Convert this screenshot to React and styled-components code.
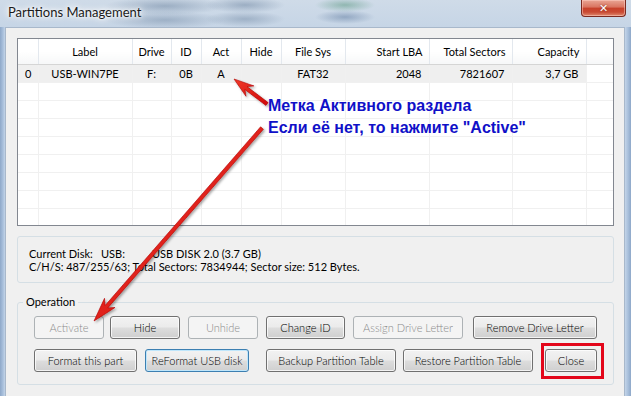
import React from 'react';
import styled, { createGlobalStyle, css } from 'styled-components';

const columns = [
    { key: 'num', title: '', width: 20, align: 'left' },
    { key: 'label', title: 'Label', width: 94, align: 'center' },
    { key: 'drive', title: 'Drive', width: 39, align: 'center' },
    { key: 'id', title: 'ID', width: 30, align: 'center' },
    { key: 'act', title: 'Act', width: 40, align: 'center' },
    { key: 'hide', title: 'Hide', width: 40, align: 'center' },
    { key: 'fs', title: 'File Sys', width: 64, align: 'center' },
    { key: 'lba', title: 'Start LBA', width: 84, align: 'right' },
    { key: 'total', title: 'Total Sectors', width: 83, align: 'right' },
    { key: 'cap', title: 'Capacity', width: 74, align: 'right' },
    { key: 'fill', title: '', width: 27, align: 'left' },
];

const partition = {
    num: '0', label: 'USB-WIN7PE', drive: 'F:', id: '0B', act: 'A', hide: '',
    fs: 'FAT32', lba: '2048', total: '7821607', cap: '3,7 GB', fill: '',
};

const row1 = [
    { text: 'Activate', w: 70, ml: 0, disabled: true },
    { text: 'Hide', w: 70, ml: 6 },
    { text: 'Unhide', w: 70, ml: 8, disabled: true },
    { text: 'Change ID', w: 79, ml: 8 },
    { text: 'Assign Drive Letter', w: 110, ml: 8, disabled: true },
    { text: 'Remove Drive Letter', w: 124, ml: 10 },
];

const row2 = [
    { text: 'Format this part', w: 103, ml: 0 },
    { text: 'ReFormat USB disk', w: 104, ml: 8, isDefault: true },
    { text: 'Backup Partition Table', w: 130, ml: 17 },
    { text: 'Restore Partition Table', w: 130, ml: 7 },
    { text: 'Close', w: 52, ml: 12, marked: true },
];

// polygon for a barbed arrow from tail (x1,y1) to tip (x2,y2)
const arrowPoints = (x1, y1, x2, y2, shaft = 3.6, headLen = 22, headW = 14) => {
    const dx = x2 - x1, dy = y2 - y1;
    const len = Math.hypot(dx, dy);
    const ux = dx / len, uy = dy / len;
    const px = -uy, py = ux;
    const bx = x2 - ux * headLen, by = y2 - uy * headLen;
    const nx = bx + ux * 5, ny = by + uy * 5;
    const s = shaft / 2, h = headW / 2;
    const pts = [
        [x1 + px * s, y1 + py * s],
        [nx + px * s, ny + py * s],
        [bx + px * h, by + py * h],
        [x2, y2],
        [bx - px * h, by - py * h],
        [nx - px * s, ny - py * s],
        [x1 - px * s, y1 - py * s],
    ];
    return pts.map(p => p.map(v => v.toFixed(1)).join(',')).join(' ');
};

const App = () => (
    <>
        <GlobalStyle />
        <Window>
            <TitleBar>
                <Title>Partitions Management</Title>
                <CloseX>&#x2715;</CloseX>
            </TitleBar>
            <Client>
                <ListView>
                    <Table>
                        <colgroup>
                            {columns.map(c => <col key={c.key} style={{ width: c.width }} />)}
                        </colgroup>
                        <thead>
                            <tr>
                                {columns.map(c => <Th key={c.key} $align={c.align}>{c.title}</Th>)}
                            </tr>
                        </thead>
                        <tbody>
                            <Tr $selected>
                                {columns.map(c => <Td key={c.key} $align={c.align}>{partition[c.key]}</Td>)}
                            </Tr>
                            {Array.from({ length: 9 }).map((_, i) => (
                                <Tr key={i}>
                                    {columns.map(c => <Td key={c.key} />)}
                                </Tr>
                            ))}
                        </tbody>
                    </Table>
                </ListView>

                <InfoGroup>
                    <InfoLine>
                        <InfoCell $w={72}>Current Disk:</InfoCell>
                        <InfoCell $w={51}>USB:</InfoCell>
                        <span>USB DISK 2.0 (3.7 GB)</span>
                    </InfoLine>
                    <InfoLine>C/H/S: 487/255/63; Total Sectors: 7834944; Sector size: 512 Bytes.</InfoLine>
                </InfoGroup>

                <OperationGroup>
                    <Legend>Operation</Legend>
                    <ButtonRow>
                        {row1.map(b => (
                            <Button key={b.text} $w={b.w} $ml={b.ml} disabled={b.disabled}>{b.text}</Button>
                        ))}
                    </ButtonRow>
                    <ButtonRow>
                        {row2.map(b => (
                            <Button key={b.text} $w={b.w} $ml={b.ml} $default={b.isDefault} $marked={b.marked}>
                                {b.text}
                            </Button>
                        ))}
                    </ButtonRow>
                </OperationGroup>
            </Client>

            <Callout>
                <div>Метка Активного раздела</div>
                <div>Если её нет, то нажмите "Active"</div>
            </Callout>

            <ArrowLayer width="631" height="396" viewBox="0 0 631 396">
                <defs>
                    <filter id="arrowShadow" x="-20%" y="-20%" width="140%" height="140%">
                        <feDropShadow dx="1.5" dy="1.5" stdDeviation="1.2" floodColor="#000" floodOpacity="0.35" />
                    </filter>
                    <linearGradient id="arrowFill" x1="0" y1="0" x2="1" y2="1">
                        <stop offset="0" stopColor="#f03a2a" />
                        <stop offset="1" stopColor="#d10a0a" />
                    </linearGradient>
                </defs>
                <g filter="url(#arrowShadow)" fill="url(#arrowFill)" stroke="#b00000" strokeWidth="0.6">
                    <polygon points={arrowPoints(267, 104, 234, 79, 3.6, 20, 13)} />
                    <polygon points={arrowPoints(262, 128, 94, 321, 3.6, 24, 14)} />
                </g>
            </ArrowLayer>
        </Window>
    </>
);

const uiFont = 'Lato, "Noto Sans", sans-serif';

const GlobalStyle = createGlobalStyle`
    html, body {
        margin: 0;
        padding: 0;
    }
    body {
        width: 631px;
        height: 396px;
        overflow: hidden;
        font-family: ${uiFont};
        font-size: 11px;
        font-weight: 400;
        color: #000;
    }
`;

const Window = styled.div`
    position: relative;
    width: 631px;
    height: 396px;
    display: flex;
    flex-direction: column;
    overflow: hidden;
    background: linear-gradient(90deg, #8ea8c9 0, #a9c0dc 3px, #c3d4e8 5px, #c3d4e8 625px, #a9c0dc 628px, #8ea8c9 631px);
`;

const TitleBar = styled.div`
    height: 27px;
    flex-shrink: 0;
    display: flex;
    justify-content: space-between;
    align-items: flex-start;
    padding: 0 5px 0 8px;
    background:
        radial-gradient(ellipse 60px 9px at 165px 6px, rgba(95, 120, 150, 0.45), transparent),
        radial-gradient(ellipse 60px 9px at 165px 20px, rgba(95, 120, 150, 0.4), transparent),
        radial-gradient(ellipse 40px 8px at 245px 5px, rgba(95, 120, 150, 0.45), transparent),
        radial-gradient(ellipse 40px 8px at 245px 19px, rgba(95, 120, 150, 0.4), transparent),
        radial-gradient(ellipse 30px 7px at 345px 5px, rgba(70, 140, 110, 0.45), transparent),
        radial-gradient(ellipse 30px 7px at 345px 17px, rgba(80, 110, 150, 0.45), transparent),
        linear-gradient(180deg, #cfdbe8 0%, #c6d5e6 100%);
`;

const Title = styled.div`
    margin-top: 4px;
    font-size: 13px;
    line-height: 16px;
    color: #1a1a1a;
    text-shadow: 0 0 6px #fff, 0 0 10px #fff, 0 0 3px #fff;
`;

const CloseX = styled.div`
    width: 45px;
    height: 17px;
    box-sizing: border-box;
    display: flex;
    align-items: center;
    justify-content: center;
    border: 1px solid #7a2a20;
    border-top: none;
    border-radius: 0 0 4px 4px;
    background: linear-gradient(180deg, #e9a594 0%, #d9735f 45%, #c7402a 50%, #c94a33 75%, #df8a6f 100%);
    box-shadow: inset 0 0 0 1px rgba(255, 210, 200, 0.5);
    color: #fff;
    font-family: "DejaVu Sans", sans-serif;
    font-size: 11px;
    font-weight: bold;
    text-shadow: 0 0 2px #7a2a20;
`;

const Client = styled.div`
    flex: 1;
    margin: 0 6px 0 5px;
    border: 1px solid #a8b8cb;
    border-bottom: none;
    background: #f0f0f0;
    padding: 10px 10px 0 11px;
    display: flex;
    flex-direction: column;
`;

const ListView = styled.div`
    height: 186px;
    border: 1px solid #828790;
    background: #fff;
    overflow: hidden;
`;

const Table = styled.table`
    width: 100%;
    table-layout: fixed;
    border-collapse: collapse;
`;

const Th = styled.th`
    height: 24px;
    padding: 0 ${p => (p.$align === 'right' ? '6px' : '4px')} 1px 4px;
    font-weight: 400;
    font-size: 11px;
    color: #000;
    text-align: ${p => p.$align};
    white-space: nowrap;
    background: linear-gradient(180deg, #ffffff 0%, #ffffff 50%, #f6f7f8 100%);
    border-right: 1px solid #e3e8ee;
    border-bottom: 1px solid #d5d5d5;
`;

const Tr = styled.tr`
    height: 18px;
    ${p => p.$selected && css`
        background: #efefef;
        td:last-child { background: #fff; }
    `}
`;

const Td = styled.td`
    padding: 0 ${p => (p.$align === 'right' ? '7px' : '4px')} 0 ${p => (p.$align === 'left' ? '7px' : '4px')};
    font-size: 11px;
    line-height: 17px;
    text-align: ${p => p.$align || 'left'};
    white-space: nowrap;
    overflow: hidden;
    border-right: 1px solid #f0f0f0;
    border-bottom: 1px solid #f0f0f0;
`;

const InfoGroup = styled.div`
    margin-top: 10px;
    height: 47px;
    box-sizing: border-box;
    border: 1px solid #d5dfe5;
    border-radius: 3px;
    padding: 10px 11px 0;
`;

const InfoLine = styled.div`
    display: flex;
    font-size: 11px;
    line-height: 13px;
    white-space: nowrap;
`;

const InfoCell = styled.span`
    width: ${p => p.$w}px;
    flex-shrink: 0;
`;

const OperationGroup = styled.fieldset`
    margin: 12px 0 0;
    border: 1px solid #d5dfe5;
    border-radius: 3px;
    padding: 7px 16px 12px 16px;
    display: flex;
    flex-direction: column;
    gap: 10px;
`;

const Legend = styled.legend`
    margin-left: -11px;
    padding: 0 3px;
    font-size: 11px;
    line-height: 14px;
`;

const ButtonRow = styled.div`
    display: flex;
`;

const Button = styled.button`
    position: relative;
    width: ${p => p.$w}px;
    height: 23px;
    margin-left: ${p => p.$ml}px;
    padding: 0;
    font-family: ${uiFont};
    font-size: 11px;
    font-weight: 300;
    color: #000;
    border: 1px solid #707070;
    border-radius: 3px;
    background: linear-gradient(180deg, #f2f2f2 0%, #ebebeb 48%, #dddddd 52%, #cfcfcf 100%);
    box-shadow: inset 0 0 0 1px rgba(255, 255, 255, 0.75);
    white-space: nowrap;

    ${p => p.disabled && css`
        border-color: #adb2b5;
        background: #f4f4f4;
        color: #8b8b8b;
        box-shadow: none;
    `}

    ${p => p.$default && css`
        border-color: #3c7fb1;
        box-shadow: inset 0 0 0 1px #bfe6fb;
    `}

    ${p => p.$marked && css`
        &::after {
            content: '';
            position: absolute;
            top: -7px;
            left: -5px;
            right: -8px;
            bottom: -8px;
            border: 3px solid #e3061a;
        }
    `}
`;

const Callout = styled.div`
    position: absolute;
    left: 268px;
    top: 95px;
    font-family: "Liberation Sans", Arial, sans-serif;
    font-size: 16px;
    font-weight: bold;
    line-height: 22px;
    color: #1010c8;
    white-space: nowrap;
`;

const ArrowLayer = styled.svg`
    position: absolute;
    left: 0;
    top: 0;
    pointer-events: none;
`;

export default App;
